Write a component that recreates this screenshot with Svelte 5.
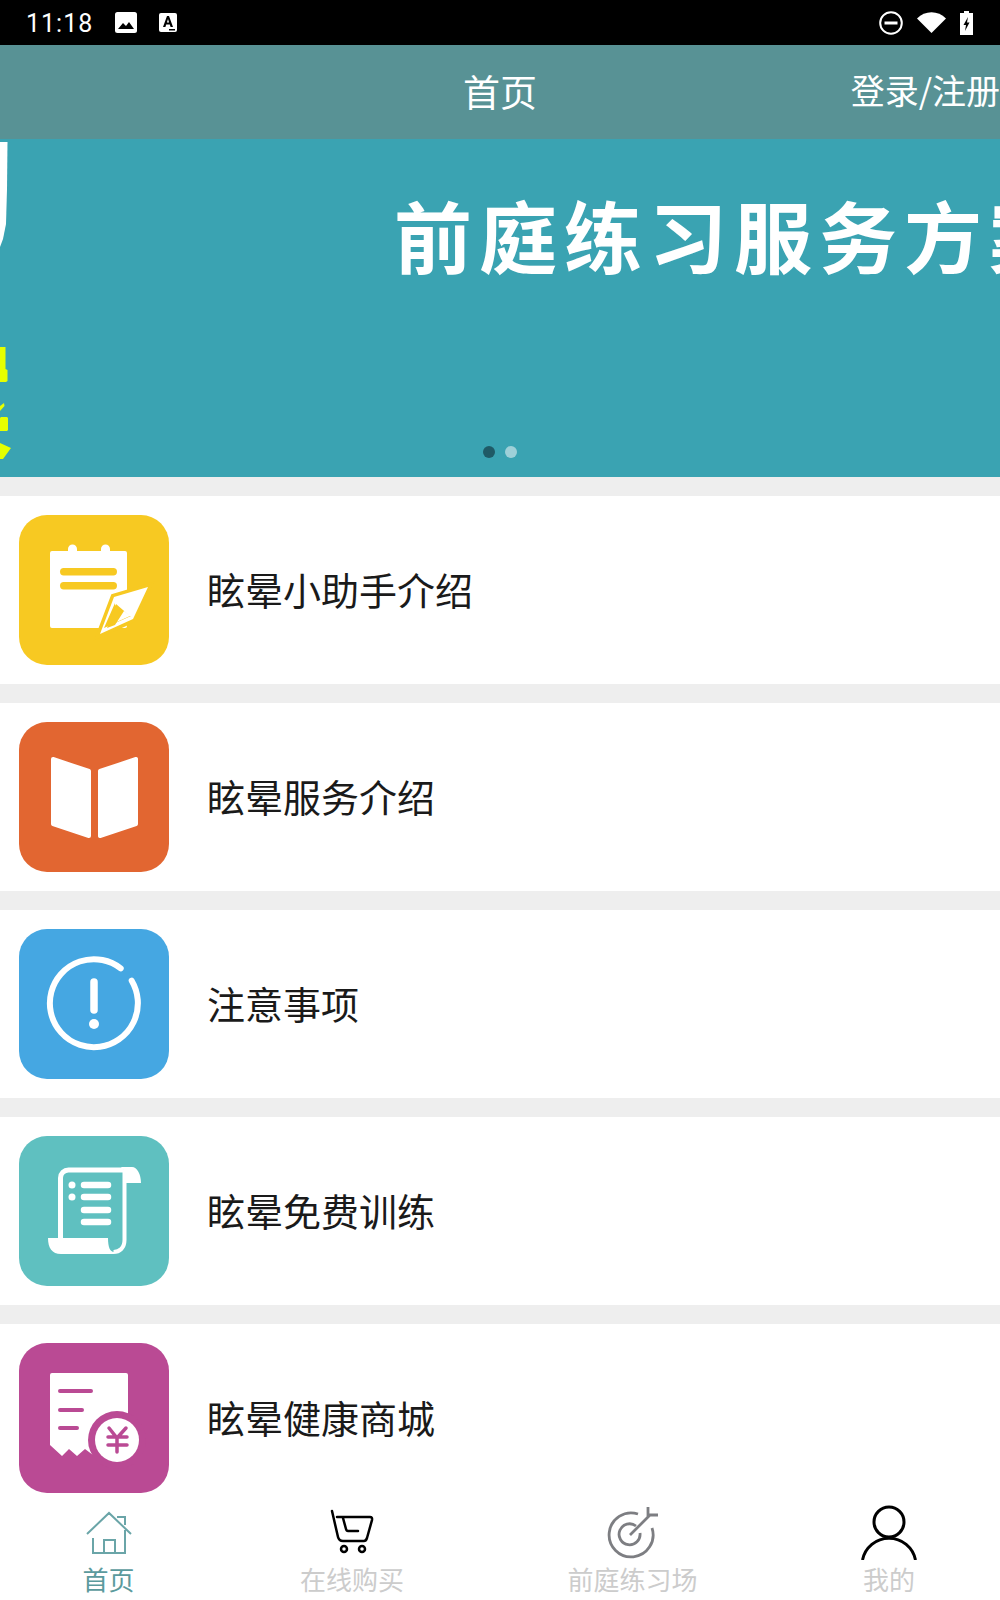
<script>
	const rows = [
		{ id: 'note', label: '眩晕小助手介绍', color: '#f7c922' },
		{ id: 'book', label: '眩晕服务介绍', color: '#e26631' },
		{ id: 'alert', label: '注意事项', color: '#45a7e2' },
		{ id: 'scroll', label: '眩晕免费训练', color: '#5fc0c0' },
		{ id: 'receipt', label: '眩晕健康商城', color: '#ba4a94' }
	];

	const tabs = [
		{ id: 'home', label: '首页', active: true },
		{ id: 'cart', label: '在线购买' },
		{ id: 'target', label: '前庭练习场' },
		{ id: 'user', label: '我的' }
	];
</script>

<div class="page">
	<div class="status-bar">
		<div class="status-group">
			<span class="time">11:18</span>
			<svg class="img-icon" viewBox="0 0 22 21">
				<rect width="22" height="21" rx="2.5" fill="#fff" />
				<path d="M3 17l5-6 3 3 3-4 5 7z" fill="#000" />
			</svg>
			<svg class="a-icon" viewBox="0 0 18 19">
				<rect width="18" height="19" rx="2" fill="#fff" />
				<path d="M4 14L8 3h2l4 11h-2.4l-.8-2.4H7.2L6.4 14zM7.9 9.6h2.2L9 6z" fill="#000" />
				<path d="M10 16h6v1.5h-6z" fill="#000" />
			</svg>
		</div>
		<div class="status-group right">
			<svg class="dnd-icon" viewBox="0 0 24 24">
				<circle cx="12" cy="12" r="10.8" fill="none" stroke="#fff" stroke-width="2" />
				<rect x="5.5" y="10.5" width="13" height="3" fill="#fff" />
			</svg>
			<svg class="wifi-icon" viewBox="0 0 29 21">
				<path d="M0 6.5C8-2 21-2 29 6.5L14.500 21z" fill="#fff" />
			</svg>
			<svg class="battery-icon" viewBox="0 0 13 24">
				<path d="M4 0h5v2h4v22H0V2h4z" fill="#fff" />
				<path d="M8 6L3.500 14h2.500l-1 6 4.500-8.500H7z" fill="#000" />
			</svg>
		</div>
	</div>

	<header class="top-bar">
		<span></span>
		<h1>首页</h1>
		<a class="login" href="#login">登录/注册</a>
	</header>

	<main class="content">
		<section class="banner">
			<svg class="banner-edge" viewBox="0 0 14 340">
				<path d="M0 3h7.500L7 50l-1 35-3 15-3 8z" fill="#fff" />
				<path d="M0 208h5.500v22l2 1v11l-1.500 1H0zM0 272v-5l4-3 .5 3zM1 278h6l1 1v12l-1 1H0v-13zM0 304l11 5-8 11-3 0z" fill="#e6ff00" />
			</svg>
			<div class="banner-title">前庭练习服务方案</div>
			<div class="dots">
				<span class="dot current"></span>
				<span class="dot"></span>
			</div>
		</section>

		{#each rows as row}
			<a class="row" href={`#${row.id}`}>
				<span class="row-icon" style={`background:${row.color}`}>
					<svg viewBox="0 0 150 150">
						{#if row.id === 'note'}
							<path d="M33 36h16v-2a4.500 4.500 0 0 1 9 0v2h24v-2a4.500 4.500 0 0 1 9 0v2h15a2 2 0 0 1 2 2v73a2 2 0 0 1-2 2H33a2 2 0 0 1-2-2V38a2 2 0 0 1 2-2z" fill="#fff" />
							<rect x="41" y="53" width="57" height="7.500" rx="3.700" fill={row.color} />
							<rect x="41" y="67" width="57" height="7.500" rx="3.700" fill={row.color} />
							<path d="M129 72L95 82 81 119l33-15z" fill="#fff" stroke={row.color} stroke-width="7" />
							<path d="M129 72L95 82 81 119l33-15z" fill="#fff" />
							<path d="M96 88l-11 25 27-12-4 0-12-11z" fill={row.color} />
							<path d="M99 90l12 11-20 9z" fill="#fff" />
							<path d="M97 89l14 12-6-5-9 14-8 3z" fill={row.color} />
						{:else if row.id === 'book'}
							<path d="M34 37l36 12v65L34 102z" fill="#fff" stroke="#fff" stroke-width="4" stroke-linejoin="round" />
							<path d="M81 49l36-12v65l-36 12z" fill="#fff" stroke="#fff" stroke-width="4" stroke-linejoin="round" />
						{:else if row.id === 'alert'}
							<path d="M112.700 51.700A44 44 0 1 1 101.700 39.300" fill="none" stroke="#fff" stroke-width="6" stroke-linecap="round" />
							<path d="M75 53v28" stroke="#fff" stroke-width="7.500" stroke-linecap="round" />
							<circle cx="75" cy="95" r="5" fill="#fff" />
						{:else if row.id === 'scroll'}
							<path d="M41.500 102V42a8 8 0 0 1 8-8H104" fill="none" stroke="#fff" stroke-width="5" />
							<path d="M102 31h11c5 0 9 7 9 16h-18c0-6 0-10 1-12z" fill="#fff" />
							<path d="M105.500 34v70c0 8-5 12-11 12" fill="none" stroke="#fff" stroke-width="4" />
							<path d="M29 102h60c0 9 2 14 6 14v2H42c-9 0-13-6-13-16z" fill="#fff" />
							<circle cx="53" cy="49" r="3.500" fill="#fff" />
							<circle cx="53" cy="61" r="3.500" fill="#fff" />
							<path d="M65 49h24M65 61h24M65 74h24M65 86h24" stroke="#fff" stroke-width="6.500" stroke-linecap="round" />
						{:else if row.id === 'receipt'}
							<path d="M33 30h74a2 2 0 0 1 2 2v80H74l-8-6-8 7-8-7-7 7-12-11V32a2 2 0 0 1 2-2z" fill="#fff" />
							<path d="M41 48h31M41 67h22M41 85h17" stroke={row.color} stroke-width="4" stroke-linecap="round" />
							<circle cx="98" cy="97" r="29" fill={row.color} />
							<circle cx="98" cy="97" r="22" fill="#fff" />
							<path d="M90 85l8 10 9-10M89 94h19M89 102h19M98 95v14" fill="none" stroke={row.color} stroke-width="3.500" stroke-linecap="round" />
						{/if}
					</svg>
				</span>
				<span class="row-label">{row.label}</span>
			</a>
			<div class="row-gap"></div>
		{/each}
	</main>

	<nav class="tabs">
		{#each tabs as tab}
			<a class="tab" class:active={tab.active} href={`#${tab.id}`}>
				<svg viewBox="0 0 60 55">
					{#if tab.id === 'home'}
						<path d="M8 29L30 8l22 21M38 12h8v8M14 33v15h32V25M25 48V35h11v13" fill="none" stroke="#6aa5a8" stroke-width="2" />
					{:else if tab.id === 'cart'}
						<path d="M10 6l6 26q1 4 5 4h21q2 0 3-3l5-18q.5-3-2-3H15M21 13l3 11q.5 2 2 2h10" fill="none" stroke="#000" stroke-width="2.500" stroke-linecap="round" />
						<circle cx="22" cy="44" r="3" fill="none" stroke="#000" stroke-width="2.500" />
						<circle cx="40" cy="44" r="3" fill="none" stroke="#000" stroke-width="2.500" />
					{:else if tab.id === 'target'}
						<g fill="none" stroke="#7d7e82" stroke-width="2.800">
							<path d="M35 9A22 22 0 1 0 49 23" />
							<path d="M33 21A10.500 10.500 0 1 0 37 28" />
							<path d="M27 30L47 10M45 2v8h10" />
						</g>
					{:else if tab.id === 'user'}
						<circle cx="30" cy="17" r="15" fill="none" stroke="#000" stroke-width="3" />
						<path d="M3.500 55A27 27 0 0 1 56.500 55" fill="none" stroke="#000" stroke-width="3" />
					{/if}
				</svg>
				<span>{tab.label}</span>
			</a>
		{/each}
	</nav>
</div>

<style>
	:global(body) {
		margin: 0;
		background: white;
	}

	.page {
		height: 1600px;
		display: flex;
		flex-direction: column;
		overflow: hidden;
		font-family: 'Noto Sans CJK SC', 'Noto Sans', sans-serif;
	}

	a {
		text-decoration: none;
	}

	.status-bar {
		height: 45px;
		flex: none;
		background: #000;
		display: flex;
		justify-content: space-between;
		align-items: center;
		padding: 0 27px 0 26px;
	}

	.status-group {
		display: flex;
		align-items: center;
		gap: 22px;
	}

	.status-group.right {
		gap: 14px;
	}

	.time {
		padding-top: 2px;
		color: #fff;
		font-family: Roboto, sans-serif;
		font-size: 25px;
		letter-spacing: 1px;
		width: 67px;
	}

	.img-icon {
		width: 22px;
		height: 21px;
	}

	.a-icon {
		width: 18px;
		height: 19px;
	}

	.dnd-icon {
		width: 24px;
		height: 24px;
	}

	.wifi-icon {
		width: 29px;
		height: 21px;
	}

	.battery-icon {
		width: 13px;
		height: 24px;
	}

	.top-bar {
		height: 94px;
		flex: none;
		background: #589295;
		display: grid;
		grid-template-columns: 1fr auto 1fr;
		align-items: center;
		color: #fff;
	}

	.top-bar h1 {
		margin: 0 0 2px;
		font-size: 37px;
		font-weight: 400;
	}

	.login {
		justify-self: end;
		margin-bottom: 5px;
		color: #fff;
		font-size: 34px;
		white-space: nowrap;
	}

	.content {
		flex: 1;
		min-height: 0;
		overflow: hidden;
		background: #eee;
	}

	.banner {
		position: relative;
		height: 338px;
		margin-bottom: 19px;
		background: #3aa3b2;
		overflow: hidden;
	}

	.banner-edge {
		position: absolute;
		left: 0;
		top: 0;
		width: 14px;
		height: 340px;
	}

	.banner-title {
		padding: 40px 0 0 394px;
		color: #fff;
		font-size: 78px;
		line-height: 110px;
		font-weight: 700;
		letter-spacing: 7px;
		white-space: nowrap;
	}

	.dots {
		position: absolute;
		left: 483px;
		top: 307px;
		display: flex;
		gap: 10px;
	}

	.dot {
		width: 12px;
		height: 12px;
		border-radius: 50%;
		background: #9ed0d8;
	}

	.dot.current {
		background: #1f5a66;
	}

	.row {
		display: flex;
		align-items: center;
		gap: 38px;
		padding: 19px;
		background: white;
		color: #1a1a1a;
	}

	.row-gap {
		height: 19px;
		background: #eee;
	}

	.row-icon {
		width: 150px;
		height: 150px;
		border-radius: 28px;
		flex: none;
	}

	.row-icon svg {
		display: block;
		width: 150px;
		height: 150px;
	}

	.row-label {
		padding-bottom: 4px;
		font-size: 38px;
		white-space: nowrap;
	}

	.tabs {
		height: 95px;
		flex: none;
		background: white;
		display: grid;
		grid-template-columns: 217px 270px 291px 222px;
	}

	.tab {
		display: flex;
		flex-direction: column;
		align-items: center;
		color: #ccc;
		font-size: 26px;
		line-height: 38px;
	}

	.tab svg {
		width: 60px;
		height: 55px;
		display: block;
	}

	.tab.active {
		color: #5b9a9d;
	}
</style>
